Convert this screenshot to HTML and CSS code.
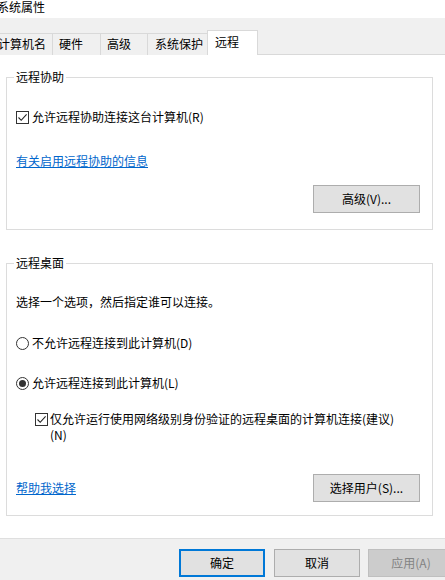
FILE: index.html
```html
<!DOCTYPE html>
<html lang="zh-CN">
<head>
<meta charset="utf-8">
<title>系统属性</title>
<link rel="stylesheet" href="styles.css">
</head>
<body>
<div class="dialog">
  <div class="titlebar">系统属性</div>
  <div class="tabs">
    <div class="tab tab-1">计算机名</div>
    <div class="tab tab-2">硬件</div>
    <div class="tab tab-3">高级</div>
    <div class="tab tab-4">系统保护</div>
    <div class="tab tab-active">远程</div>
  </div>
  <div class="panel">
    <fieldset class="group group-assist">
      <legend>远程协助</legend>
      <div class="row row-check1">
        <span class="check"><svg width="11" height="11" viewBox="0 0 11 11"><polyline points="1.5,5.5 4.2,8.3 9.6,2.3" fill="none" stroke="#222" stroke-width="1.1"/></svg></span>
        <span class="label">允许远程协助连接这台计算机(R)</span>
      </div>
      <div class="row row-link1"><a class="link" href="#">有关启用远程协助的信息</a></div>
      <div class="row row-btn1"><button class="btn btn-side">高级(V)...</button></div>
    </fieldset>
    <fieldset class="group group-desktop">
      <legend>远程桌面</legend>
      <div class="row row-intro">选择一个选项，然后指定谁可以连接。</div>
      <div class="row row-radio1">
        <span class="radio"></span>
        <span class="label">不允许远程连接到此计算机(D)</span>
      </div>
      <div class="row row-radio2">
        <span class="radio radio-on"></span>
        <span class="label">允许远程连接到此计算机(L)</span>
      </div>
      <div class="row row-check2">
        <span class="check"><svg width="11" height="11" viewBox="0 0 11 11"><polyline points="1.5,5.5 4.2,8.3 9.6,2.3" fill="none" stroke="#222" stroke-width="1.1"/></svg></span>
        <span class="label label-wrap">仅允许运行使用网络级别身份验证的远程桌面的计算机连接(建议)(N)</span>
      </div>
      <div class="row row-btn2">
        <a class="link" href="#">帮助我选择</a>
        <button class="btn btn-side">选择用户(S)...</button>
      </div>
    </fieldset>
  </div>
  <div class="footer">
    <button class="btn btn-foot btn-default">确定</button>
    <button class="btn btn-foot">取消</button>
    <button class="btn btn-foot btn-disabled">应用(A)</button>
  </div>
</div>
</body>
</html>
```
FILE: styles.css
```css
* { box-sizing: border-box; }
html, body {
  margin: 0;
  padding: 0;
  background: #ffffff;
}
body {
  width: 445px;
  height: 580px;
  overflow: hidden;
  font-family: "Noto Sans CJK SC", "Noto Sans", sans-serif;
  font-size: 12px;
  color: #000;
}
.dialog {
  width: 445px;
  height: 580px;
  display: flex;
  flex-direction: column;
}
.titlebar {
  height: 18px;
  line-height: 13px;
  margin-left: -3px;
  white-space: nowrap;
}
.tabs {
  height: 37px;
  background: #f0f0f0;
  border-bottom: 1px solid #d9d9d9;
  display: flex;
  align-items: flex-end;
  margin-left: -9px;
}
.tab {
  height: 22px;
  margin-bottom: -1px;
  border-top: 1px solid #d9d9d9;
  border-left: 1px solid #d9d9d9;
  background: #f0f0f0;
  padding-left: 6px;
  line-height: 20px;
  white-space: nowrap;
  flex: none;
}
.tab-1 { width: 61px; }
.tab-2 { width: 48px; }
.tab-3 { width: 47px; }
.tab-4 { width: 60px; padding-left: 7px; }
.tab-active {
  width: 51px;
  height: 25px;
  background: #fff;
  border: 1px solid #d9d9d9;
  border-bottom: none;
  padding-left: 7px;
  line-height: 22px;
  position: relative;
  z-index: 1;
}
.panel {
  flex: 1;
  background: #fff;
  padding: 15px 0 0 6px;
}
.group {
  margin: 0;
  padding: 0;
  min-width: 0;
  width: 427px;
  border: 1px solid #dcdcdc;
}
.group legend {
  padding: 0 2px;
  margin-left: 7px;
  line-height: 14px;
  height: 14px;
}
.group-desktop { margin-top: 26px; }
.row {
  display: flex;
  align-items: center;
  line-height: 16px;
  padding-left: 9px;
}
.check {
  width: 13px;
  height: 13px;
  border: 1px solid #333;
  background: #fff;
  display: flex;
  align-items: center;
  justify-content: center;
  flex: none;
  margin-right: 3px;
}
.check svg { display: block; }
.radio {
  width: 13px;
  height: 13px;
  border: 1px solid #333;
  border-radius: 50%;
  background: #fff;
  flex: none;
  margin-right: 3px;
  display: flex;
  align-items: center;
  justify-content: center;
}
.radio-on::after {
  content: "";
  width: 7px;
  height: 7px;
  border-radius: 50%;
  background: #333;
}
.link {
  color: #0066cc;
  text-decoration: underline;
}
.btn {
  font-family: inherit;
  font-size: 12px;
  color: #000;
  background: #e1e1e1;
  border: 1px solid #adadad;
  padding: 0;
  margin: 0;
  height: 28px;
  line-height: 16px;
}
.btn-side { width: 107px; }
.row-check1 { margin-top: 25px; }
.row-link1 { margin-top: 28px; }
.row-btn1 {
  margin-top: 16px;
  padding-bottom: 16px;
  justify-content: flex-end;
  padding-right: 12px;
}
.row-intro { margin-top: 24px; }
.row-radio1 { margin-top: 25px; }
.row-radio2 { margin-top: 24px; }
.row-check2 {
  margin-top: 20px;
  padding-left: 28px;
  align-items: flex-start;
}
.row-check2 .check { margin-top: 2px; margin-right: 2px; }
.label-wrap { width: 350px; }
.row-btn2 {
  margin-top: 31px;
  padding-bottom: 13px;
  justify-content: space-between;
  padding-right: 12px;
}
.footer {
  height: 42px;
  flex: none;
  background: #f0f0f0;
  border-top: 1px solid #dfdfdf;
  display: flex;
  align-items: flex-start;
  padding: 10px 0 0 179px;
  gap: 8px;
}
.btn-foot {
  width: 86px;
  flex: none;
}
.btn-default {
  border: 2px solid #0078d7;
  margin-right: 1px;
}
.btn-disabled {
  background: #cccccc;
  border-color: #bfbfbf;
  color: #838383;
}
```
